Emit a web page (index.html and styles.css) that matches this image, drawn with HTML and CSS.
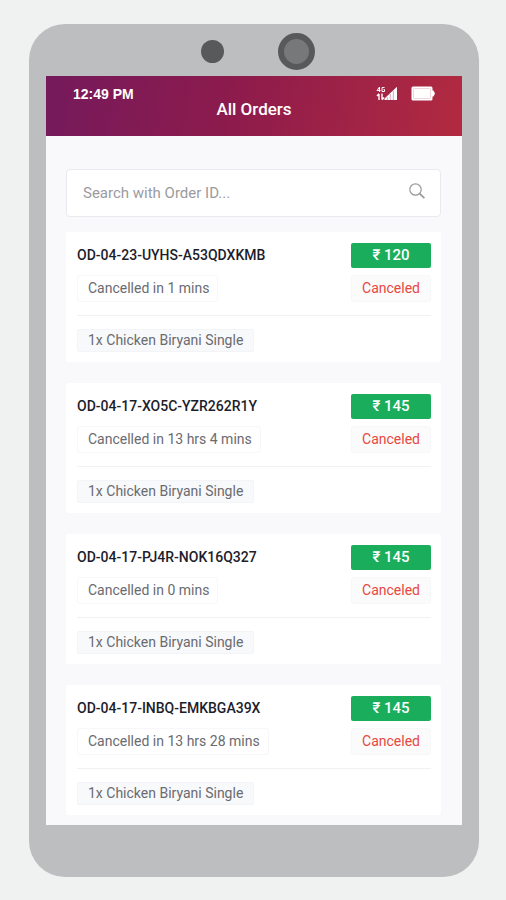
FILE: index.html
```html
<!DOCTYPE html>
<html lang="en">
<head>
<meta charset="utf-8">
<meta name="viewport" content="width=device-width, initial-scale=1">
<title>All Orders</title>
<link rel="stylesheet" href="styles.css">
</head>
<body>
<div class="phone">
  <div class="bezel">
    <span class="sensor"></span>
    <span class="camera"></span>
  </div>
  <div class="screen">
    <header class="app-bar">
      <div class="status-bar">
        <span class="clock">12:49 PM</span>
        <span class="indicators">
          <svg class="signal" viewBox="0 0 22 15" aria-hidden="true">
            <g fill="none" stroke="currentColor" stroke-width="1">
              <path d="M3.500 6V1L1 4.500h3.500M8.500 1.500H6v4h2.500v-2H7.500"/>
              <path stroke-width="1.400" d="M3 14V8M1 10l2-2.200M6 7.500v6M8 11.500l-2 2.200"/>
            </g>
            <path fill="currentColor" d="M8.500 14v-1.500L21 .8V14z"/>
            <path stroke="#c06a82" stroke-width=".6" d="M11.300 11v3M14.300 8v6M17.300 5v9"/>
          </svg>
          <svg class="battery" viewBox="0 0 24 15" aria-hidden="true">
            <path fill="currentColor" d="M2 .5h18a1.500 1.500 0 0 1 1.500 1.500v2.500h1L24 7.500l-1.500 3h-1V13a1.500 1.500 0 0 1-1.500 1.500H2A1.500 1.500 0 0 1 .5 13V2A1.500 1.500 0 0 1 2 .5z"/>
            <rect x="2.500" y="2.500" width="17" height="10" rx="1" fill="none" stroke="#e6b8c2" stroke-width=".6"/>
          </svg>
        </span>
      </div>
      <h1 class="title">All Orders</h1>
    </header>
    <main class="content">
      <form class="search">
        <input class="search-input" type="text" placeholder="Search with Order ID..." aria-label="Search with Order ID">
        <button class="search-button" type="button" aria-label="Search">
          <svg viewBox="0 0 16 16" aria-hidden="true"><g fill="none" stroke="currentColor"><circle cx="6.500" cy="6.500" r="5.700" stroke-width="1.200"/><path stroke-width="1.800" d="M10.700 10.700l4.700 4.500"/></g></svg>
        </button>
      </form>
      <section class="orders" aria-label="Orders">
        <article class="order">
          <div class="row"><h2 class="order-id">OD-04-23-UYHS-A53QDXKMB</h2><span class="price">₹ 120</span></div>
          <div class="row"><span class="chip">Cancelled in 1 mins</span><span class="chip state">Canceled</span></div>
          <div class="items"><span class="item">1x Chicken Biryani Single</span></div>
        </article>
        <article class="order">
          <div class="row"><h2 class="order-id">OD-04-17-XO5C-YZR262R1Y</h2><span class="price">₹ 145</span></div>
          <div class="row"><span class="chip">Cancelled in 13 hrs 4 mins</span><span class="chip state">Canceled</span></div>
          <div class="items"><span class="item">1x Chicken Biryani Single</span></div>
        </article>
        <article class="order">
          <div class="row"><h2 class="order-id">OD-04-17-PJ4R-NOK16Q327</h2><span class="price">₹ 145</span></div>
          <div class="row"><span class="chip">Cancelled in 0 mins</span><span class="chip state">Canceled</span></div>
          <div class="items"><span class="item">1x Chicken Biryani Single</span></div>
        </article>
        <article class="order">
          <div class="row"><h2 class="order-id">OD-04-17-INBQ-EMKBGA39X</h2><span class="price">₹ 145</span></div>
          <div class="row"><span class="chip">Cancelled in 13 hrs 28 mins</span><span class="chip state">Canceled</span></div>
          <div class="items"><span class="item">1x Chicken Biryani Single</span></div>
        </article>
      </section>
    </main>
  </div>
</div>
</body>
</html>
```
FILE: styles.css
```css
* {
  box-sizing: border-box;
}

body {
  margin: 0;
  padding: 24px 27px 23px 29px;
  background: #f0f2f1;
  font-family: Roboto, "Liberation Sans", sans-serif;
  font-size: 14px;
  color: #6a6b70;
}

.phone {
  padding: 0 17px 52px;
  border-radius: 36px;
  background: #bcbebf;
}

.bezel {
  display: flex;
  align-items: center;
  justify-content: center;
  gap: 54px;
  height: 52px;
  padding: 2px 0 0 8px;
}

.sensor {
  width: 23px;
  height: 23px;
  border-radius: 50%;
  background: #58595b;
}

.camera {
  width: 37px;
  height: 37px;
  border: 6px solid #58595b;
  border-radius: 50%;
  background: #77787a;
}

.screen {
  background: #f9f9fc;
}

.app-bar {
  height: 60px;
  padding: 10px 27px 0;
  background: linear-gradient(100deg, #751a5c, #8d1b4c 45%, #b22a40);
  color: #fff;
}

.status-bar {
  display: flex;
  justify-content: space-between;
  height: 15px;
}

.clock {
  font: bold 14px/17px "Liberation Sans Narrow", "Liberation Sans", sans-serif;
}

.indicators {
  display: flex;
  gap: 13px;
}

.signal {
  width: 22px;
  height: 15px;
}

.battery {
  width: 24px;
  height: 15px;
}

.title {
  margin: 0;
  font-size: 17px;
  font-weight: 500;
  line-height: 17px;
  text-align: center;
}

.content {
  padding: 33px 21px 10px 20px;
}

.search {
  display: flex;
  align-items: center;
  height: 48px;
  margin-bottom: 15px;
  padding: 0 15px 0 16px;
  border: 1px solid #e9eaed;
  border-radius: 4px;
  background: #fff;
}

.search-input {
  flex: 1;
  min-width: 0;
  padding: 0;
  border: 0;
  outline: 0;
  background: none;
  font: 15px/20px Roboto, sans-serif;
  color: #6a6b70;
}

.search-input::placeholder {
  color: #9b9b9f;
}

.search-button {
  display: flex;
  padding: 0 0 4px;
  border: 0;
  background: none;
  color: #999a9d;
}

.search-button svg {
  width: 16px;
  height: 16px;
}

.orders {
  display: grid;
  gap: 21px;
}

.order {
  display: grid;
  gap: 7px;
  padding: 11px 10px 10px 11px;
  border-radius: 3px;
  background: #fff;
}

.row {
  display: flex;
  align-items: flex-start;
  justify-content: space-between;
}

.order-id {
  margin: 0;
  font-size: 14px;
  font-weight: 500;
  line-height: 24px;
  color: #1d1d2b;
}

.price {
  width: 80px;
  border-radius: 2px;
  background: #1aae5c;
  color: #fff;
  font-size: 15px;
  font-weight: 500;
  line-height: 25px;
  text-align: center;
}

.chip {
  padding: 0 8px 0 10px;
  border: 1px solid #f7f7f9;
  border-radius: 3px;
  line-height: 25px;
}

.state {
  min-width: 80px;
  padding: 0;
  background: #fbfbfc;
  color: #e8473f;
  text-align: center;
}

.items {
  display: flex;
  margin-top: 6px;
  padding-top: 13px;
  border-top: 1px solid #f1f1f4;
}

.item {
  padding: 0 10px;
  border: 1px solid #f2f4f7;
  border-radius: 2px;
  background: #f8f9fb;
  line-height: 21px;
}
```
